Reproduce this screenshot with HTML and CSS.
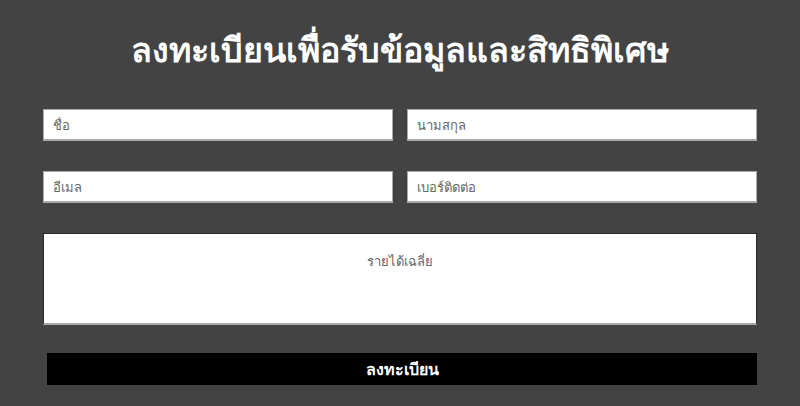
FILE: index.html
```html
<!DOCTYPE html>
<html lang="th">
<head>
<meta charset="utf-8">
<link rel="stylesheet" href="styles.css">
</head>
<body>
<div class="page">
  <h1 class="title">ลงทะเบียนเพื่อรับข้อมูลและสิทธิพิเศษ</h1>
  <form class="form">
    <div class="row">
      <input class="field" type="text" placeholder="ชื่อ">
      <input class="field" type="text" placeholder="นามสกุล">
    </div>
    <div class="row">
      <input class="field" type="text" placeholder="อีเมล">
      <input class="field" type="text" placeholder="เบอร์ติดต่อ">
    </div>
    <textarea class="area" placeholder="รายได้เฉลี่ย"></textarea>
    <button class="submit" type="button">ลงทะเบียน</button>
  </form>
</div>
</body>
</html>
```
FILE: styles.css
```css
html, body {
  margin: 0;
  padding: 0;
  background: #434343;
  height: 100%;
}
body {
  font-family: "Noto Sans", "DejaVu Sans", sans-serif;
}
.page {
  width: 714px;
  margin: 0 auto;
  padding-top: 24px;
}
.title {
  margin: 0;
  text-align: center;
  color: #fff;
  font-size: 34px;
  font-weight: bold;
  line-height: 50px;
  height: 62px;
}
.form {
  display: flex;
  flex-direction: column;
  margin-top: 23px;
}
.row {
  display: grid;
  grid-template-columns: 1fr 1fr;
  column-gap: 14px;
  margin-bottom: 30px;
}
.field {
  box-sizing: border-box;
  height: 32px;
  border: 1px solid #a9a9a9;
  border-bottom-width: 2px;
  background: #fff;
  padding: 0 9px;
  font-size: 13px;
  font-family: inherit;
  color: #333;
  outline: none;
}
.field::placeholder, .area::placeholder {
  color: #666;
}
.area {
  box-sizing: border-box;
  height: 92px;
  border: 1px solid #2a2a2a;
  border-bottom: 2px solid #a9a9a9;
  background: #fff;
  padding: 17px 10px 0;
  text-align: center;
  font-size: 13px;
  font-family: inherit;
  resize: none;
  outline: none;
}
.submit {
  margin: 28px 0 0 4px;
  width: 710px;
  height: 32px;
  background: #000;
  color: #fff;
  border: none;
  font-family: inherit;
  font-size: 16px;
  font-weight: bold;
  padding: 0;
}
```
